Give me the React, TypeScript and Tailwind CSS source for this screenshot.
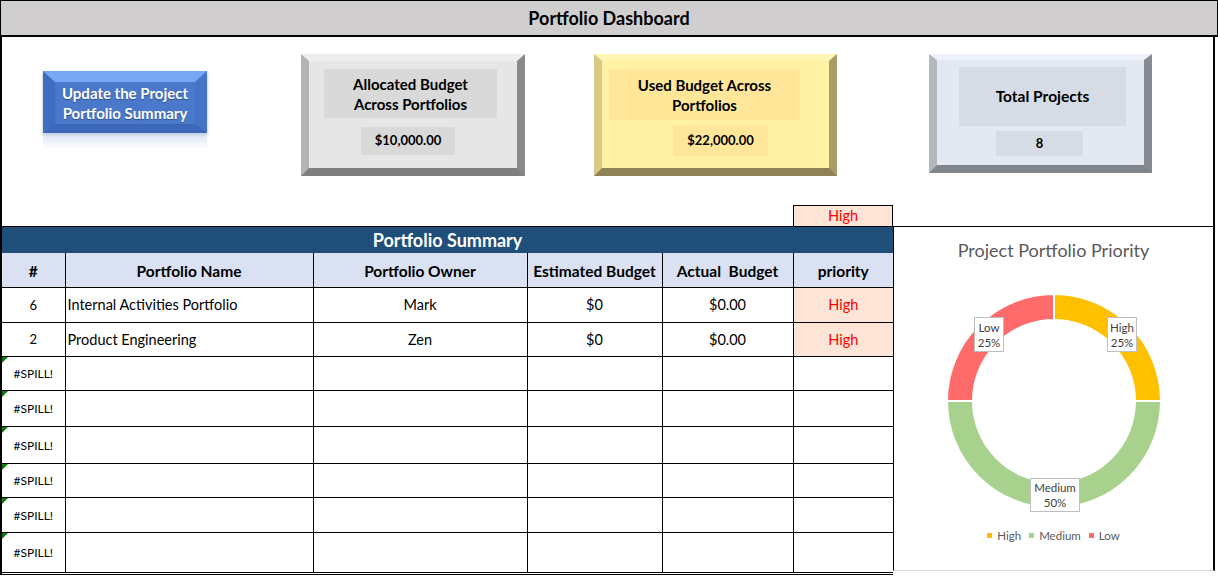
import React from "react";

const rows = [
  { id: "6", name: "Internal Activities Portfolio", owner: "Mark", est: "$0", act: "$0.00", pr: "High", h: 35 },
  { id: "2", name: "Product Engineering", owner: "Zen", est: "$0", act: "$0.00", pr: "High", h: 34 },
  { id: "#SPILL!", h: 34 },
  { id: "#SPILL!", h: 36 },
  { id: "#SPILL!", h: 37 },
  { id: "#SPILL!", h: 34 },
  { id: "#SPILL!", h: 35 },
  { id: "#SPILL!", h: 40 },
];

const slices = [
  { label: "High", color: "#ffc000", from: 0, to: 90 },
  { label: "Medium", color: "#a9d18e", from: 90, to: 270 },
  { label: "Low", color: "#ff6b6b", from: 270, to: 360 },
];

function arc(cx: number, cy: number, ro: number, ri: number, a0: number, a1: number) {
  const p = (r: number, a: number) => {
    const t = ((a - 90) * Math.PI) / 180;
    return `${(cx + r * Math.cos(t)).toFixed(2)} ${(cy + r * Math.sin(t)).toFixed(2)}`;
  };
  const large = a1 - a0 > 180 ? 1 : 0;
  return `M ${p(ro, a0)} A ${ro} ${ro} 0 ${large} 1 ${p(ro, a1)} L ${p(ri, a1)} A ${ri} ${ri} 0 ${large} 0 ${p(ri, a0)} Z`;
}

function BevelCard({
  title,
  value,
  card,
  box,
  label,
  val,
}: {
  title: React.ReactNode;
  value: string;
  card: string;
  box: string;
  label: string;
  val: string;
}) {
  return (
    <div className={`h-[122px] border-t-[7px] border-l-[8px] border-r-[8px] border-b-[8px] flex flex-col items-start ${card}`}>
      <div className={`${label} ${box} flex items-center justify-center text-center text-[15px] font-bold leading-[20px] text-black`}>
        {title}
      </div>
      <div className={`${val} ${box} flex items-center justify-center text-[13px] font-bold text-black`}>
        {value}
      </div>
    </div>
  );
}

export default function App() {
  return (
    <div className="w-[1218px] h-[576px] bg-white overflow-hidden font-['Lato','Open_Sans',sans-serif] text-black">
      {/* title bar */}
      <div className="h-[37px] border border-black border-b-2 bg-[#d0cece] flex items-center justify-center">
        <span className="text-[18px] font-bold">Portfolio Dashboard</span>
      </div>

      {/* KPI area */}
      <div className="h-[190px] w-[1215px] border-l-2 border-r-2 border-b border-black flex flex-col">
        <div className="flex items-start">
          <div className="ml-[41px] mt-[34px] flex flex-col">
            <div className="w-[164px] h-[62px] border-t-[11px] border-l-[12px] border-r-[12px] border-b-[9px] border-t-[#78a6f2] border-l-[#3f6dc2] border-r-[#4573c6] border-b-[#3d67b8] bg-[#4a79cc] flex items-center justify-center text-center text-white text-[15px] font-bold leading-[20px] whitespace-nowrap [text-shadow:0_1px_1px_rgba(0,0,0,0.35)] shadow-[0_2px_3px_rgba(0,0,0,0.3)]">
              Update the Project<br />Portfolio Summary
            </div>
            <div className="w-[164px] h-[16px] bg-gradient-to-b from-[#c9d7f0] to-white opacity-70" />
          </div>
          <div className="ml-[94px] mt-[17px]">
            <BevelCard
              title={<>Allocated Budget<br />Across Portfolios</>}
              value="$10,000.00"
              card="w-[224px] bg-[#e6e6e6] border-t-[#eeeeee] border-l-[#b4b4b4] border-r-[#8a8a8a] border-b-[#7f7f7f]"
              box="bg-[#d9d9d9]"
              label="ml-[15px] mt-[8px] w-[173px] h-[49px]"
              val="ml-[52px] mt-[9px] w-[94px] h-[28px]"
            />
          </div>
          <div className="ml-[69px] mt-[17px]">
            <BevelCard
              title={<>Used Budget Across<br />Portfolios</>}
              value="$22,000.00"
              card="w-[243px] bg-[#fff2a3] border-t-[#fff6b4] border-l-[#d9c887] border-r-[#a89d69] border-b-[#8f8258]"
              box="bg-[#ffe699]"
              label="ml-[7px] mt-[8px] w-[191px] h-[51px]"
              val="ml-[71px] mt-[5px] w-[95px] h-[31px]"
            />
          </div>
          <div className="ml-[92px] mt-[17px]">
            <div className="w-[223px] h-[119px] border-t-[6px] border-l-[8px] border-r-[8px] border-b-[8px] border-t-[#edf2fa] border-l-[#b3b8c0] border-r-[#878b91] border-b-[#80858b] bg-[#e3e9f2] flex flex-col items-start">
              <div className="ml-[22px] mt-[7px] w-[167px] h-[59px] bg-[#d6dce5] flex items-center justify-center text-[15.5px] font-bold">
                Total Projects
              </div>
              <div className="ml-[59px] mt-[5px] w-[87px] h-[25px] bg-[#d6dce5] flex items-center justify-center text-[13px] font-bold">
                8
              </div>
            </div>
          </div>
        </div>
        <div className="mt-auto ml-[791px] w-[100px] h-[21px] border border-b-0 border-black bg-[#fce4d6] flex items-center justify-center text-[14.5px] text-[#ff0000]">
          High
        </div>
      </div>

      <div className="flex">
        {/* table */}
        <div className="w-[893px] border-l-2 border-black">
          <div className="h-[26px] bg-[#1f4e79] flex items-center justify-center text-white text-[18px] font-bold">
            Portfolio Summary
          </div>
          <table className="border-collapse table-fixed w-[891px] text-[14.5px]">
            <colgroup>
              <col className="w-[63px]" />
              <col className="w-[248px]" />
              <col className="w-[214px]" />
              <col className="w-[135px]" />
              <col className="w-[131px]" />
              <col className="w-[100px]" />
            </colgroup>
            <thead>
              <tr className="h-[34px] bg-[#d9e1f2] font-bold text-[15.5px]">
                <th className="border-r border-b border-black pt-[3px]">#</th>
                <th className="border-x border-b border-black pt-[3px]">Portfolio Name</th>
                <th className="border-x border-b border-black pt-[3px]">Portfolio Owner</th>
                <th className="border-x border-b border-black pt-[3px] whitespace-nowrap">Estimated Budget</th>
                <th className="border-x border-b border-black pt-[3px] whitespace-pre">{"Actual  Budget"}</th>
                <th className="border-l border-b border-black pt-[3px]">priority</th>
              </tr>
            </thead>
            <tbody>
              {rows.map((r, i) => (
                <tr key={i} style={{ height: r.h }}>
                  <td className="relative border-r border-b border-black text-center">
                    {r.id === "#SPILL!" ? (
                      <>
                        <span className="absolute left-0 top-0 w-0 h-0 border-t-[6px] border-t-[#107c10] border-r-[6px] border-r-transparent" />
                        <span className="text-[12px]">#SPILL!</span>
                      </>
                    ) : (
                      <span className="text-[13px]">{r.id}</span>
                    )}
                  </td>
                  <td className="border border-black pl-[2px] pt-[1px]">{r.name}</td>
                  <td className="border border-black text-center pt-[1px]">{r.owner}</td>
                  <td className="border border-black text-center pt-[1px]">{r.est}</td>
                  <td className="border border-black text-center pt-[1px]">{r.act}</td>
                  <td className={`border-l border-b border-black text-center pt-[1px] text-[#ff0000] ${r.pr ? "bg-[#fce4d6]" : ""}`}>
                    {r.pr}
                  </td>
                </tr>
              ))}
            </tbody>
          </table>
          <div className="h-[1px] mt-[1px] bg-black" />
        </div>

        {/* chart */}
        <div className="relative w-[322px] h-[344px] border-l border-r-2 border-l-black border-r-black border-b border-b-[#d9d9d9]">
          <div className="pt-[10px] text-center text-[18px] text-[#595959]">
            Project Portfolio Priority
          </div>
          <svg className="mx-auto mt-[22px]" width="230" height="230" viewBox="0 0 230 230">
            {slices.map((s) => (
              <path key={s.label} d={arc(115, 115, 107, 81, s.from, s.to)} fill={s.color} stroke="#ffffff" strokeWidth="2" />
            ))}
          </svg>
          <div className="absolute left-[213px] top-[90px] w-[30px] h-[35px] bg-white border border-[#bfbfbf] text-[11.5px] leading-[15px] text-[#404040] flex flex-col items-center justify-center">
            <span>High</span>
            <span>25%</span>
          </div>
          <div className="absolute left-[80px] top-[90px] w-[30px] h-[35px] bg-white border border-[#bfbfbf] text-[11.5px] leading-[15px] text-[#404040] flex flex-col items-center justify-center">
            <span>Low</span>
            <span>25%</span>
          </div>
          <div className="absolute left-[136px] top-[251px] w-[50px] h-[34px] bg-white border border-[#bfbfbf] text-[11.5px] leading-[15px] text-[#404040] flex flex-col items-center justify-center">
            <span>Medium</span>
            <span>50%</span>
          </div>
          <div className="absolute left-0 right-0 top-[300px] flex justify-center items-center gap-[8px] text-[11.5px] text-[#595959]">
            {slices.map((s) => (
              <span key={s.label} className="flex items-center gap-[5px]">
                <span className="w-[5px] h-[5px]" style={{ background: s.color }} />
                {s.label}
              </span>
            ))}
          </div>
        </div>
      </div>
    </div>
  );
}
